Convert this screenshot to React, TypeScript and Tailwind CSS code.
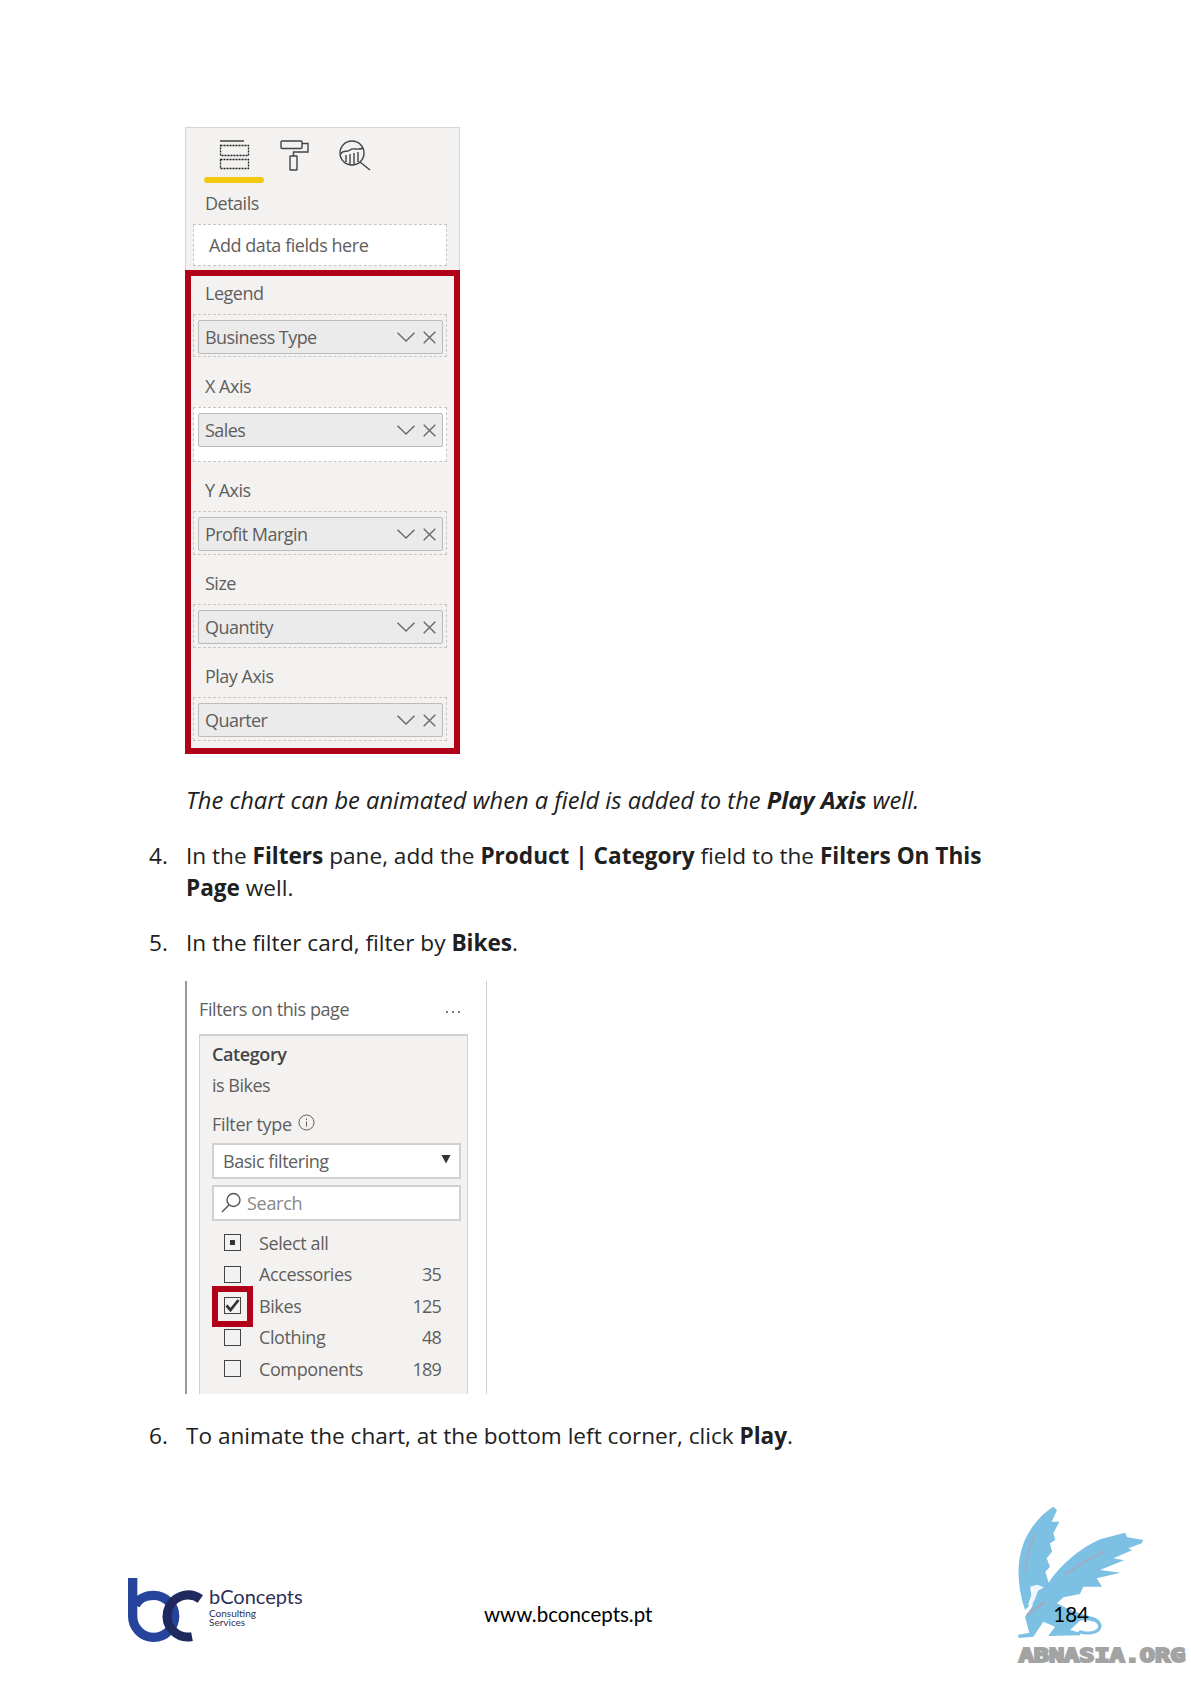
import React from "react";

const ui = "font-['Open_Sans','Noto_Sans',sans-serif]";

function Chevron() {
  return (
    <svg width="18" height="10" viewBox="0 0 18 10" fill="none" stroke="#6b6967" strokeWidth="1.4">
      <path d="M0.5 0.8 L9 9 L17.5 0.8" />
    </svg>
  );
}

function Cross() {
  return (
    <svg width="13" height="13" viewBox="0 0 13 13" fill="none" stroke="#6b6967" strokeWidth="1.4">
      <path d="M0.7 0.7 L12.3 12.3 M12.3 0.7 L0.7 12.3" />
    </svg>
  );
}

function Field({ label, value, top, well }: { label: string; value: string; top: string; well: string }) {
  return (
    <div className={top}>
      <div className="h-[34px] pl-[14px] flex items-center text-[18px] text-[#605e5c] tracking-[-0.5px]">{label}</div>
      <div className={`${well} mt-[4px] ml-[2px] w-[254px] border border-dashed border-[#c8c6c4] pt-[5px] pl-[4px] pr-[3px]`}>
        <div className="h-[34px] rounded-[2px] border border-[#bdbbb9] bg-[#ebebeb] flex items-center pl-[6px] pr-[6px] text-[18px] text-[#605e5c] tracking-[-0.55px]">
          <span className="flex-1">{value}</span>
          <span className="flex translate-x-[1px]"><Chevron /></span>
          <span className="ml-[9px] flex"><Cross /></span>
        </div>
      </div>
    </div>
  );
}

function VisualPane() {
  return (
    <div className={`${ui} ml-[36px] w-[275px] bg-[#f3f2f1]`}>
      <div className="h-[143px] border-t border-x border-[#d6d6d6] relative">
        <div className="flex items-start h-[53px] pl-[18px] pt-[12px]">
          <div className="w-[60px] flex flex-col items-center">
            <svg width="31" height="31" viewBox="0 0 31 31" fill="none" stroke="#222" strokeWidth="1.3">
              <path d="M1 1 H25" />
              <rect x="1.5" y="5.5" width="28" height="10" strokeDasharray="2 1" />
              <rect x="1.5" y="19.5" width="28" height="9" strokeDasharray="2 1" />
            </svg>
            <div className="mt-[6px] w-[60px] h-[6px] rounded-full bg-[#f2c811]" />
          </div>
          <svg className="ml-[16px]" width="30" height="32" viewBox="0 0 30 32" fill="none" stroke="#444" strokeWidth="1.4">
            <rect x="1" y="1" width="21" height="7.5" rx="1" />
            <path d="M22 3.5 H28 V12 H13.5 V16" />
            <rect x="10" y="16" width="7" height="14" rx="0.5" />
          </svg>
          <svg className="ml-[29px]" width="33" height="33" viewBox="0 0 33 33" fill="none" stroke="#444" strokeWidth="1.4">
            <circle cx="13" cy="13" r="12" />
            <path d="M21 22 L31 30" />
            <path d="M1.5 14 C5 9 8 13 11 10 C14 7 18 11 24 8" />
            <path d="M7 15 V22 M11 14 V24 M15 13 V25 M19 12 V22" />
          </svg>
        </div>
        <div className="h-[43px] pl-[19px] flex items-center text-[18px] text-[#605e5c] tracking-[-0.5px]">Details</div>
        <div className="ml-[7px] w-[254px] h-[42px] border border-dashed border-[#c8c6c4] bg-white flex items-center pl-[15px] pb-[1px] text-[18px] text-[#605e5c] tracking-[-0.45px]">
          Add data fields here
        </div>
      </div>
      <div className="h-[484px] border-[6px] border-[#b20018]">
        <Field top="" well="h-[43px]" label="Legend" value="Business Type" />
        <Field top="mt-[12px]" well="h-[55px] bg-white" label="X Axis" value="Sales" />
        <Field top="mt-[11px]" well="h-[44px]" label="Y Axis" value="Profit Margin" />
        <Field top="mt-[11px]" well="h-[44px]" label="Size" value="Quantity" />
        <Field top="mt-[11px]" well="h-[44px]" label="Play Axis" value="Quarter" />
      </div>
    </div>
  );
}

function Check({ state }: { state: "none" | "partial" | "on" }) {
  return (
    <div className="w-[17px] h-[17px] border-[1.5px] border-[#444] flex items-center justify-center">
      {state === "partial" && <div className="w-[5px] h-[5px] bg-[#333]" />}
      {state === "on" && (
        <svg width="15" height="13" viewBox="0 0 15 13" fill="none" stroke="#333" strokeWidth="2.8">
          <path d="M1.5 6.5 L5.5 11 L13.5 1" />
        </svg>
      )}
    </div>
  );
}

function Row({ name, count, state, marked }: { name: string; count?: string; state: "none" | "partial" | "on"; marked?: boolean }) {
  return (
    <div className="h-[31.5px] flex items-center text-[18px] text-[#605e5c] tracking-[-0.4px] relative">
      <div className="ml-[12px] w-[35px] flex"><Check state={state} /></div>
      <span className="flex-1">{name}</span>
      <span className="mr-[20px] tracking-[-0.8px]">{count}</span>
      {marked && <div className="absolute left-0 top-[-4px] w-[41px] h-[41px] border-[6px] border-[#b20018]" />}
    </div>
  );
}

function FilterPane() {
  return (
    <div className={`${ui} ml-[36px] w-[302px] h-[413px] border-l-2 border-l-[#9a9a9a] border-r border-r-[#cfcfcf] bg-white`}>
      <div className="h-[53px] pl-[12px] pr-[26px] pt-[3px] flex items-center justify-between text-[18px] text-[#605e5c] tracking-[-0.4px]">
        <span>Filters on this page</span>
        <span className="flex gap-[4px] mt-[6px]">
          <i className="w-[2px] h-[2px] bg-[#777]" />
          <i className="w-[2px] h-[2px] bg-[#777]" />
          <i className="w-[2px] h-[2px] bg-[#777]" />
        </span>
      </div>
      <div className="ml-[12px] w-[269px] h-[360px] bg-[#f3f2f1] border-x border-t-2 border-[#d3d1cf] pl-[12px] pr-[6px]">
        <div className="h-[36px] flex items-center font-semibold text-[18px] text-[#444] tracking-[-0.4px]">Category</div>
        <div className="h-[26px] flex items-center text-[18px] text-[#605e5c] tracking-[-0.5px]">is Bikes</div>
        <div className="h-[45px] pt-[7px] flex items-center text-[18px] text-[#605e5c] tracking-[-0.35px]">
          Filter type
          <svg className="ml-[6px] mb-[4px]" width="17" height="17" viewBox="0 0 17 17" fill="none" stroke="#605e5c" strokeWidth="1">
            <circle cx="8.5" cy="8.5" r="7.5" />
            <path d="M8.5 7.5 V12.5 M8.5 4.5 V6" />
          </svg>
        </div>
        <div className="h-[36px] bg-white border-2 border-[#d3d1cf] flex items-center pl-[9px] pr-[8px] text-[18px] text-[#605e5c] tracking-[-0.45px]">
          <span className="flex-1">Basic filtering</span>
          <svg className="mb-[4px]" width="10" height="10" viewBox="0 0 10 10" fill="#333">
            <path d="M0.5 1 H9.5 L5 9.5 Z" />
          </svg>
        </div>
        <div className="mt-[6px] h-[36px] bg-white border-2 border-[#d3d1cf] flex items-center pl-[6px] text-[18px] text-[#8a8886] tracking-[-0.3px]">
          <svg width="22" height="22" viewBox="0 0 22 22" fill="none" stroke="#555" strokeWidth="1.4">
            <circle cx="13.5" cy="8" r="6.5" />
            <path d="M9 13 L2 20" />
          </svg>
          <span className="ml-[5px]">Search</span>
        </div>
        <div className="mt-[6px]">
          <Row name="Select all" state="partial" />
          <Row name="Accessories" count="35" state="none" />
          <Row name="Bikes" count="125" state="on" marked />
          <Row name="Clothing" count="48" state="none" />
          <Row name="Components" count="189" state="none" />
        </div>
      </div>
    </div>
  );
}

function Griffin() {
  return (
    <svg className="absolute left-[1000px] top-[1490px]" width="191" height="194" viewBox="0 0 573 582">
      <path
        fill="#7cc0e4"
        d="M75 360 C55 300 50 240 62 190 C72 140 110 80 160 50 L171 60 L155 95 L178 95 L160 130 L166 150 L150 160 L156 185 L140 205 L150 230 L136 245 L146 278 C180 225 240 175 300 148 L375 128 L382 142 L430 150 L425 160 L385 175 L396 181 L340 205 L372 211 L300 240 L362 248 L290 265 L306 290 L250 290 L240 312 L190 322 L170 340 C195 352 225 368 265 378 C295 382 312 400 302 418 C290 438 255 436 232 428 L240 420 C258 428 288 426 294 412 C298 396 270 388 240 392 L210 420 L240 428 L240 436 L145 438 L165 410 L130 395 L100 440 L55 444 L55 434 L88 428 L75 380 L96 350 L104 318 L88 300 L85 288 L112 282 L135 292 L116 302 L106 330 Z"
      />
      <path d="M145 285 L190 322 L170 340 L125 335 L116 302 Z" fill="#7cc0e4" />
      <path d="M90 290 L112 284 L132 292 L114 302 L104 330 L92 350 L84 345 L94 315 Z" fill="#eef7fc" />
      <path d="M106 130 C88 170 76 210 76 250" fill="none" stroke="#a7a7bd" strokeWidth="5" />
      <path d="M310 185 C270 205 225 232 195 255" fill="none" stroke="#a7a7bd" strokeWidth="5" />
      <path d="M136 335 L80 376" fill="none" stroke="#a7a7bd" strokeWidth="6" />
      <text x="56" y="516" fontFamily="'DejaVu Sans Mono', monospace" fontWeight="700" fontSize="59" textLength="500" lengthAdjust="spacingAndGlyphs" fill="#a3a3a3" stroke="#a3a3a3" strokeWidth="6">ABNASIA.ORG</text>
    </svg>
  );
}

function Logo() {
  return (
    <div className="flex items-start w-[356px]">
      <svg width="92" height="70" viewBox="0 0 276 210" fill="none" className="shrink-0">
        <path d="M14 0 V115 A63 63 0 1 0 77 52 C50 52 30 65 22 82" stroke="#26449b" strokeWidth="28" />
        <path d="M217 63 A63 63 0 1 0 192 176" stroke="#20295e" strokeWidth="27" />
      </svg>
      <div className="ml-[-11px] pt-[6px] font-['Lato','Noto_Sans',sans-serif] text-[#2c2f55]">
        <div className="text-[20px] leading-[24px]">bConcepts</div>
        <div className="text-[10px] leading-[9px] mt-[1px]">Consulting</div>
        <div className="text-[10px] leading-[9px]">Services</div>
      </div>
    </div>
  );
}

export default function App() {
  return (
    <div className="relative w-[1191px] h-[1684px] bg-white overflow-hidden font-['Open_Sans','Noto_Sans',sans-serif] text-[22.6px] leading-[32px] text-[#202020]">
      <div className="pt-[127px] pl-[149px] w-[990px]">
        <VisualPane />
        <p className="mt-[30px] ml-[37px] italic text-[23.7px]">
          The chart can be animated when a field is added to the <b>Play Axis</b> well.
        </p>
        <div className="mt-[24px] flex">
          <span className="w-[37px] shrink-0">4.</span>
          <p>
            In the <b>Filters</b> pane, add the <b>Product | Category</b> field to the <b>Filters On This Page</b> well.
          </p>
        </div>
        <div className="mt-[23px] flex">
          <span className="w-[37px] shrink-0">5.</span>
          <p>
            In the filter card, filter by <b>Bikes</b>.
          </p>
        </div>
        <div className="mt-[22px]">
          <FilterPane />
        </div>
        <div className="mt-[26px] flex">
          <span className="w-[37px] shrink-0">6.</span>
          <p>
            To animate the chart, at the bottom left corner, click <b>Play</b>.
          </p>
        </div>
      </div>
      <Griffin />
      <div className="mt-[126px] pl-[128px] pr-[102px] flex items-start relative">
        <Logo />
        <div className="pt-[22px] flex-1 flex justify-between text-[20.5px] leading-[28px] text-black font-['Lato',sans-serif]">
          <span>www.bconcepts.pt</span>
          <span>184</span>
        </div>
      </div>
    </div>
  );
}
